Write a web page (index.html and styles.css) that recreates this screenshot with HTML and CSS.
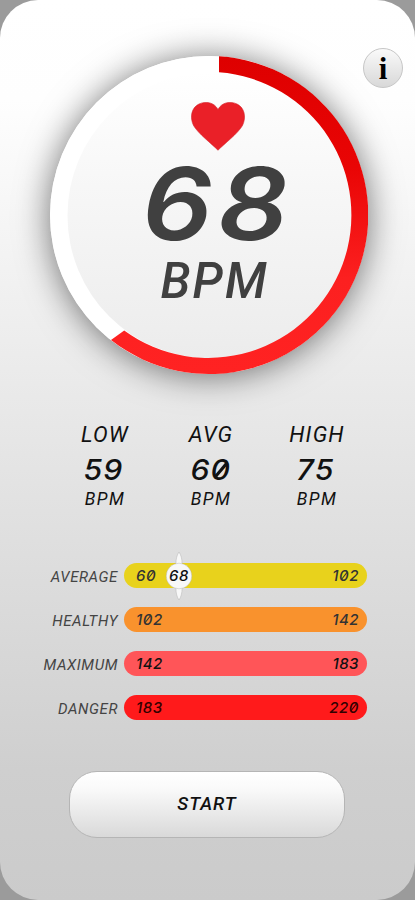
FILE: index.html
```html
<!DOCTYPE html>
<html lang="en">
<head>
<meta charset="utf-8">
<title>Heart rate</title>
<link rel="stylesheet" href="styles.css">
</head>
<body>
<main class="screen">
  <button class="info" aria-label="Information">i</button>
  <section class="gauge">
    <svg class="ring" viewBox="0 0 318 318" aria-hidden="true">
      <defs>
        <linearGradient id="red" x1="0" y1="0" x2="0" y2="1">
          <stop offset="0" stop-color="#de0000"/>
          <stop offset=".35" stop-color="#e90505"/>
          <stop offset=".7" stop-color="#fc2020"/>
          <stop offset="1" stop-color="#ff2222"/>
        </linearGradient>
        <linearGradient id="face" x1="0" y1="0" x2="0" y2="1">
          <stop offset="0" stop-color="#fff"/>
          <stop offset=".4" stop-color="#f7f7f7"/>
          <stop offset="1" stop-color="#ececec"/>
        </linearGradient>
      </defs>
      <circle cx="159" cy="159" r="159" fill="#fff"/>
      <circle cx="160.500" cy="159.500" r="143" fill="url(#face)"/>
      <path fill="url(#red)" d="M169 .3A159 159 0 1 1 61 284L74.200 274.500A143 143 0 1 0 169 16.300Z"/>
    </svg>
    <div class="reading">
      <svg class="heart" viewBox="0 0 54 49" aria-hidden="true">
        <path fill="#ea2028" stroke="#d3222a" stroke-width=".6" d="M27 48.300C21 42 7 31.500 2.500 23.500C-1.500 15 .5 5.500 8 2C15-1.300 23.500.5 27 7.500C30.500.5 39-1.300 46 2C53.500 5.500 55.500 15 51.500 23.500C47 31.500 33 42 27 48.300Z"/>
      </svg>
      <div class="bpm-value">68</div>
      <div class="bpm-unit">BPM</div>
    </div>
  </section>

  <section class="stats">
    <div class="stat"><span class="name">LOW</span><span class="value low">59</span><span class="unit">BPM</span></div>
    <div class="stat"><span class="name">AVG</span><span class="value">6<i class="zero">0</i></span><span class="unit">BPM</span></div>
    <div class="stat"><span class="name">HIGH</span><span class="value">75</span><span class="unit">BPM</span></div>
  </section>

  <section class="zones">
    <span class="label">AVERAGE</span>
    <div class="bar average"><span>6<i class="zero">0</i></span><span>1<i class="zero">0</i>2</span>
      <div class="marker">
        <svg viewBox="0 0 28 50" aria-hidden="true"><g fill="#f8f8f8" stroke="#aaa" stroke-width=".4"><path d="M14 1C16 4 17.200 8 17 13V37C17.200 42 16 46 14 49C12 46 10.800 42 11 37V13C10.800 8 12 4 14 1Z"/><circle cx="14" cy="25" r="12.800"/></g></svg>
        <b>68</b>
      </div>
    </div>
    <span class="label">HEALTHY</span>
    <div class="bar healthy"><span>1<i class="zero">0</i>2</span><span>142</span></div>
    <span class="label">MAXIMUM</span>
    <div class="bar maximum"><span>142</span><span>183</span></div>
    <span class="label">DANGER</span>
    <div class="bar danger"><span>183</span><span>22<i class="zero">0</i></span></div>
  </section>

  <button class="start">START</button>
</main>
</body>
</html>
```
FILE: styles.css
```css
* { box-sizing: border-box; }
body {
  margin: 0;
  background: #9b9b9b;
  font-family: Roboto, sans-serif;
  font-style: italic;
  color: #111;
}
button { padding: 0; font: inherit; color: inherit; }
.screen {
  position: relative;
  display: flex;
  flex-direction: column;
  height: 900px;
  padding-top: 56px;
  border-radius: 38px;
  overflow: hidden;
  background: linear-gradient(#fff 0, #fefefe 100px, #ededed 340px, #dfdfdf 540px, #cfcfcf 770px, #cbcbcb 900px);
}
.info {
  position: absolute;
  top: 48px;
  left: 363px;
  width: 40px;
  height: 40px;
  border: 1px solid #c6c6c6;
  border-radius: 50%;
  background: linear-gradient(#fafafa, #d8d8d8);
  font: bold 31px/37px "Liberation Serif", serif;
  color: #000;
}
.gauge {
  display: grid;
  width: 318px;
  height: 318px;
  margin-left: 50px;
  border-radius: 50%;
  box-shadow: 0 2px 34px rgba(0, 0, 0, .55);
}
.ring, .reading { grid-area: 1 / 1; }
.ring { width: 318px; height: 318px; }
.reading {
  display: flex;
  flex-direction: column;
  align-items: center;
  padding: 46px 0 0 18px;
  color: #404040;
}
.heart { width: 54px; height: 49px; }
.bpm-value {
  margin-top: 9px;
  font: italic 600 100px/88px Inter, sans-serif;
  letter-spacing: 5px;
  transform: scaleX(1.1);
}
.bpm-unit {
  margin: 10px 7px 0 0;
  font-size: 49px;
  font-weight: 500;
  line-height: 48px;
  letter-spacing: 2px;
}
.stats {
  display: grid;
  grid-template-columns: repeat(3, 106px);
  margin: 48px 0 0 52px;
}
.stat { display: flex; flex-direction: column; align-items: center; }
.name { font-size: 22px; line-height: 26px; letter-spacing: 1.2px; }
.value {
  font: italic 500 28px/44px Inter, sans-serif;
  letter-spacing: 1px;
  transform: scaleX(1.08);
}
.low { margin-right: 4px; }
.stat:last-child .value { margin-right: 2px; }
.unit { font-size: 17.500px; line-height: 14px; letter-spacing: 1.4px; }
.zero { position: relative; display: inline-block; }
.zero::after {
  content: "";
  position: absolute;
  left: .3em;
  top: calc(50% - .31em);
  width: .09em;
  height: .62em;
  background: currentColor;
  transform: rotate(38deg);
}
.zones {
  display: grid;
  grid-template-columns: 118px 243px;
  grid-template-rows: 25px 25px 25px 25px;
  row-gap: 19px;
  column-gap: 6px;
  margin-top: 57px;
}
.label {
  text-align: right;
  font-size: 15px;
  line-height: 28px;
  letter-spacing: .6px;
  color: #444;
}
.bar {
  position: relative;
  display: flex;
  justify-content: space-between;
  padding: 0 8px 0 12px;
  border-radius: 13px;
  font: italic 500 15px/26px Inter, sans-serif;
  letter-spacing: .5px;
  color: #333;
}
.average { background: #e8d21c; }
.healthy { background: #f9922d; }
.maximum { background: #ff5558; color: #111; }
.danger { background: #ff1a1b; color: #300; }
.marker {
  position: absolute;
  left: 41px;
  top: -12px;
  display: grid;
  width: 28px;
  height: 50px;
  place-items: center;
}
.marker svg, .marker b { grid-area: 1 / 1; }
.marker b { font-weight: 500; color: #111; }
.start {
  width: 276px;
  height: 67px;
  margin: 51px 0 0 69px;
  padding-bottom: 2px;
  border: 1px solid #b5b5b5;
  border-radius: 28px;
  background: linear-gradient(#fff, #fafafa 25%, #d9d9d9);
  font-size: 18.500px;
  font-weight: 500;
  letter-spacing: 1px;
}
```
